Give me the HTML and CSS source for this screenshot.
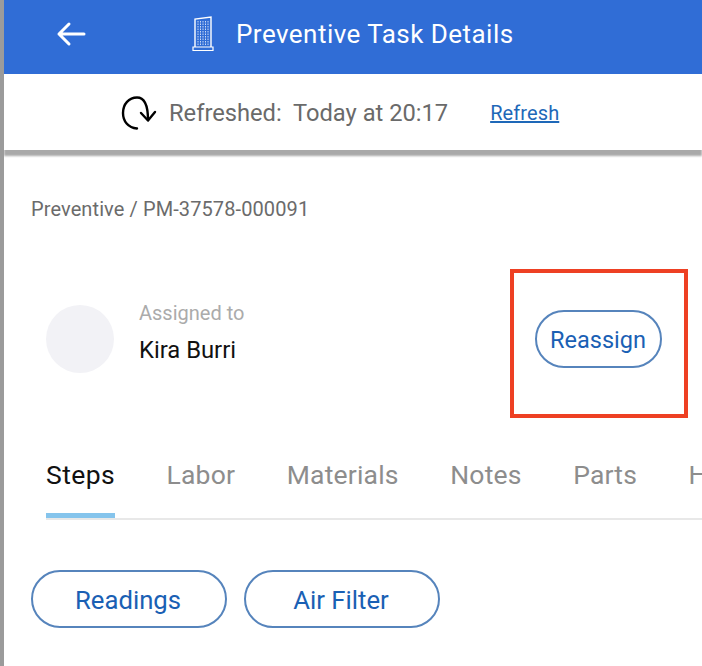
FILE: index.html
```html
<!DOCTYPE html>
<html lang="en">
<head>
  <meta charset="UTF-8">
  <meta name="viewport" content="width=device-width, initial-scale=1.0">
  <title>Preventive Task Details</title>
  <link rel="stylesheet" href="styles.css">
</head>
<body>
  <div class="page">
    <header class="topbar">
      <svg class="back-icon" width="30" height="26" viewBox="0 0 30 26" fill="none" stroke="#fff" stroke-width="3" stroke-linecap="round" stroke-linejoin="round">
        <path d="M28 13H3M13 3L3 13l10 10"/>
      </svg>
      <svg class="building-icon" width="22" height="36" viewBox="0 0 22 36" fill="none" stroke="#fff">
        <path d="M3 31V3L19 1V31" stroke-width="1.4"/>
        <path d="M1 31h20v3.500H1z" stroke-width="1.2"/>
        <path d="M6 5v24M8.500 5v24M11 5v24M13.500 5v24M16 5v24" stroke-width="1" stroke-dasharray="1.500 1" opacity=".75"/>
      </svg>
      <h1 class="title">Preventive Task Details</h1>
    </header>

    <div class="refresh-bar">
      <svg class="refresh-icon" width="36" height="34" viewBox="0 0 36 34" fill="none" stroke="#000" stroke-width="2.400" stroke-linecap="round" stroke-linejoin="round">
        <path d="M16 32.500C7 32 2 25 2 17C2 8 8 1.500 16 1.500C23 1.500 27 8 27 24"/>
        <path d="M20 17L27 24.500L34 16"/>
      </svg>
      <span class="refresh-text">Refreshed:&nbsp; Today at 20:17</span>
      <a class="refresh-link" href="#">Refresh</a>
    </div>

    <main class="content">
      <div class="crumb">Preventive / PM-37578-000091</div>

      <div class="assignee">
        <div class="avatar"></div>
        <div class="assignee-info">
          <div class="assignee-label">Assigned to</div>
          <div class="assignee-name">Kira Burri</div>
        </div>
        <button class="pill reassign">Reassign</button>
      </div>

      <nav class="tabs">
        <a class="tab active">Steps</a>
        <a class="tab">Labor</a>
        <a class="tab">Materials</a>
        <a class="tab">Notes</a>
        <a class="tab">Parts</a>
        <a class="tab">History</a>
      </nav>

      <div class="pill-row">
        <button class="pill step-pill">Readings</button>
        <button class="pill step-pill">Air Filter</button>
      </div>
    </main>

    <div class="highlight-box"></div>
  </div>
</body>
</html>
```

FILE: styles.css
```css
html, body {
  margin: 0;
  height: 100%;
  overflow: hidden;
}
body {
  font-family: Roboto, "Liberation Sans", sans-serif;
  background-color: #fff;
}
.page {
  position: relative;
  height: 666px;
  border-left: 4px solid #9b9b9b;
  overflow: hidden;
}
.topbar {
  height: 74px;
  box-sizing: border-box;
  padding-bottom: 6px;
  background-color: #306dd6;
  display: flex;
  align-items: center;
  color: #fff;
}
.back-icon {
  margin-left: 52px;
}
.building-icon {
  margin-left: 106px;
}
.title {
  margin: 0 0 0 22px;
  font-size: 26px;
  font-weight: 400;
  letter-spacing: 0.46px;
}
.refresh-bar {
  height: 76px;
  box-sizing: border-box;
  padding-top: 2px;
  display: flex;
  align-items: center;
  box-shadow: 0 6px 2px #a9a9a9;
  background-color: #fff;
  position: relative;
}
.refresh-icon {
  margin-left: 117px;
}
.refresh-text {
  margin-left: 12px;
  font-size: 23.7px;
  color: #6a6a6a;
}
.refresh-link {
  margin-left: 42px;
  font-size: 20px;
  letter-spacing: 0.1px;
  color: #1e68b8;
}
.content {
  padding-top: 47px;
}
.crumb {
  margin-left: 27px;
  font-size: 20px;
  letter-spacing: 0.1px;
  line-height: 24px;
  color: #6b6b6b;
}
.assignee {
  display: flex;
  align-items: center;
  height: 68px;
  margin: 84px 0 0 42px;
}
.avatar {
  width: 68px;
  height: 68px;
  border-radius: 50%;
  background-color: #f2f2f6;
}
.assignee-info {
  margin-left: 25px;
  padding-bottom: 15px;
  width: 396px;
  flex: none;
}
.assignee-label {
  font-size: 20px;
  line-height: 24px;
  color: #ababab;
}
.assignee-name {
  margin-top: 12px;
  font-size: 23.8px;
  line-height: 26px;
  color: #111;
}
.pill {
  background: #fff;
  border: 2px solid #5684bc;
  border-radius: 29px;
  height: 58px;
  font-family: inherit;
  color: #1a60b4;
  padding: 2px 0 0;
  flex: none;
}
.reassign {
  width: 127px;
  padding-right: 1px;
  font-size: 23.5px;
}
.tabs {
  display: flex;
  margin: 79px 0 0 42px;
  height: 68px;
  gap: 51.5px;
  border-bottom: 2px solid #e8e8e8;
  box-sizing: border-box;
  white-space: nowrap;
}
.tab {
  display: block;
  font-size: 26.5px;
  letter-spacing: 0.2px;
  line-height: 34px;
  padding-top: 6px;
  color: #8d8d8d;
  flex: none;
}
.tab.active {
  color: #111;
  height: 66px;
  box-sizing: border-box;
  letter-spacing: 0.4px;
  border-bottom: 5px solid #85c4ec;
}
.pill-row {
  display: flex;
  gap: 17px;
  margin: 50px 0 0 27px;
}
.step-pill {
  width: 196px;
  padding-right: 2px;
  font-size: 25.7px;
}
.highlight-box {
  position: absolute;
  left: 506px;
  top: 269px;
  width: 178px;
  height: 149px;
  box-sizing: border-box;
  border: 4px solid #ee4023;
}
```
